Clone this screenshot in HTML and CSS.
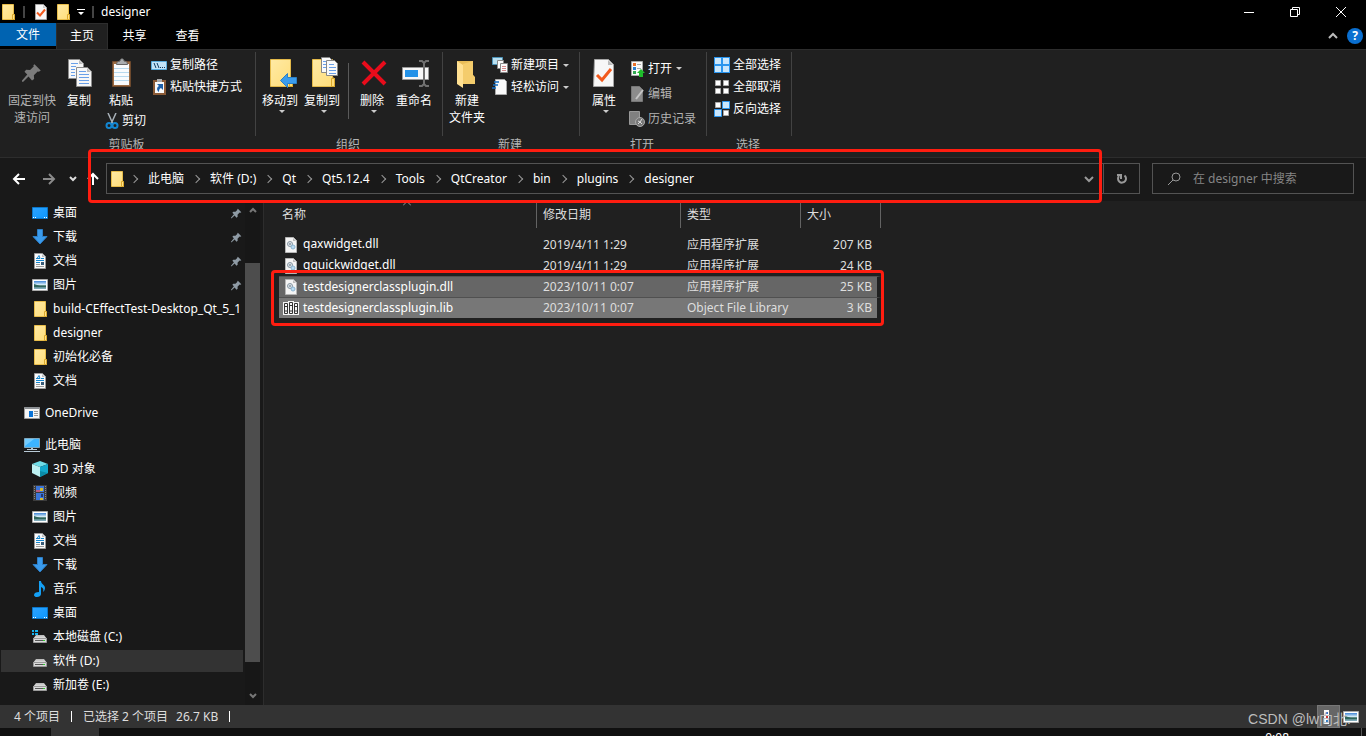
FILE: index.html
```html
<!DOCTYPE html>
<html lang="zh-CN">
<head>
<meta charset="utf-8">
<title>designer</title>
<link rel="stylesheet" href="styles.css">
</head>
<body>
<svg class="sprite" aria-hidden="true">
  <defs>
    <linearGradient id="gold" x1="0" y1="0" x2="1" y2="1"><stop offset="0" stop-color="#ffeaa5"/><stop offset="1" stop-color="#ffdd78"/></linearGradient>
    <linearGradient id="sky" x1="0" y1="0" x2="1" y2="1"><stop offset="0" stop-color="#2ea3ff"/><stop offset="1" stop-color="#0c97ff"/></linearGradient>
    <linearGradient id="photo" x1="0" y1="0" x2="0" y2="1"><stop offset="0" stop-color="#3f84d6"/><stop offset=".45" stop-color="#d5ecf7"/><stop offset=".6" stop-color="#3f6f63"/><stop offset="1" stop-color="#8cb6c9"/></linearGradient>
    <linearGradient id="drive" x1="0" y1="0" x2="0" y2="1"><stop offset="0" stop-color="#b5b5b5"/><stop offset="1" stop-color="#ededed"/></linearGradient>
  </defs>
  <symbol id="i-folder" viewBox="0 0 16 16"><path fill="url(#gold)" stroke="#e8bd4a" d="M2.500.5h11v10l1 .5v4.500h-12z"/><path fill="#ffe08a" stroke="#dba92c" d="M12.500 10.500h2v5h-2z"/></symbol>
  <symbol id="i-doccheck" viewBox="0 0 16 16"><path fill="#f7f7f7" stroke="#a5a5a5" d="M2.500.5h8l3 3v12h-11z"/><path fill="#ccc" d="M10 1v3h3z"/><path fill="none" stroke="#f25a1e" stroke-width="2" d="M4 8.500l3 3 5-6"/></symbol>
  <symbol id="i-desktop" viewBox="0 0 16 16"><path fill="url(#sky)" stroke="#0b76c8" d="M.5 2.500h15v11H.5z"/><path fill="#fff" d="M1 12h1v1H1zM3 12h1v1H3zM12 12h1v1h-1zM14 12h1v1h-1z"/></symbol>
  <symbol id="i-down" viewBox="0 0 16 16"><path fill="#3a9bed" stroke="#2c7ec6" d="M5.500.5h5v7h4.500L8 15 1 7.500h4.500z"/></symbol>
  <symbol id="i-doc" viewBox="0 0 16 16"><path fill="#fafafa" stroke="#9b9b9b" d="M2.500.5h8l3 3v12h-11z"/><path fill="#bbb" d="M10 1v3h3z"/><path fill="none" stroke="#1687cf" d="M5 5.500l2-3 1 3M4 5.500h4M9 5.500h3M4 7.500h8M4 9.500h4"/><path stroke="#999" d="M4 11.500h4M4 13.500h8"/><path fill="#395c78" d="M9 9h3v3H9z"/></symbol>
  <symbol id="i-pic" viewBox="0 0 16 16"><path fill="#fff" stroke="#aaa" d="M.5 2.500h15v11H.5z"/><path fill="url(#photo)" d="M2 4h12v8H2z"/><path fill="#2f665c" d="M2 7l6 2h6v1H2z"/></symbol>
  <symbol id="i-pin" viewBox="0 0 16 16"><path d="M10 1l5 5-1.500 1-1-.3-3 3 .2 3L8 14 5.200 10.800 1 15H0v-1l4.200-4.800L2 7l1.300-1.600 3.200.1 3-3L9 1.800z"/></symbol>
  <symbol id="i-one" viewBox="0 0 16 16"><path fill="#f5f5f5" stroke="#9b9b9b" d="M.5 2.500h15v11H.5z"/><path fill="#8c9094" d="M1 2h14v2H1z"/><path fill="#0a73d6" d="M5 6h4v6H5z"/><path stroke="#999" d="M10 6.500h4M10 8.500h4M10 10.500h4"/></symbol>
  <symbol id="i-pc" viewBox="0 0 16 16"><path fill="#3cb4ff" stroke="#7fa9c0" d="M.5 1.500h15v9H.5z"/><path fill="#72ccff" d="M1 2h9l-9 7z"/><path fill="#b9cad6" d="M7 11h2v2H7zM3 12h10v1H3zM0 14h16v1H0z"/></symbol>
  <symbol id="i-cube" viewBox="0 0 16 16"><path fill="#6fdde8" d="M8 0l8 3-8 3-8-3z"/><path fill="#bdf1f3" d="M0 3l8 3v10l-8-4z"/><path fill="#13a9cc" d="M16 3L8 6v10l8-4z"/><path fill="#0b8ba6" d="M8 10l8 2-8 4z"/></symbol>
  <symbol id="i-film" viewBox="0 0 16 16"><path fill="#3c3c3c" d="M1 0h14v16H1z"/><path stroke="#888" stroke-dasharray="1 1" d="M2.500 1v14M13.500 1v14"/><path fill="#3b75d9" d="M4 1h8v6H4zM4 8h8v7H4z"/><path fill="#b95d83" d="M4 5h4v2H4z"/><path fill="#d4b92e" d="M8 3h3v3H8zM8 13h3v2H8z"/><path fill="#22396f" d="M9 9h2v3H9z"/></symbol>
  <symbol id="i-music" viewBox="0 0 16 16"><path fill="#14a0f5" d="M7 0h2c0 3 4 4 4 7 0 2-1 3-2 4 1-3 0-4-2-5v7c0 2-2 3-4 3-3 0-3-2-3-2 0-2 2-3 5-3z"/></symbol>
  <symbol id="i-drive" viewBox="0 0 16 16"><path fill="url(#drive)" d="M4 6h8l3 4H1z"/><path fill="#dadada" stroke="#9a9a9a" d="M1.500 9.500h13v4h-13z"/><path fill="#555" d="M3 11h10v1H3z"/><path fill="#32c832" d="M11 11h2v1h-2z"/></symbol>
  <symbol id="i-cdrive" viewBox="0 0 16 16"><path fill="#18b4f1" d="M0 1h2v2H0zM3 1h3v2H3zM0 4h2v2H0zM3 4h3v2H3z"/><path fill="url(#drive)" d="M4 6h8l3 4H1z"/><path fill="#dadada" stroke="#9a9a9a" d="M1.500 9.500h13v4h-13z"/><path fill="#555" d="M3 11h10v1H3z"/><path fill="#32c832" d="M11 11h2v1h-2z"/></symbol>
  <symbol id="i-dll" viewBox="0 0 16 16"><path fill="#f4f4f4" stroke="#b5b5b5" d="M2.500.5h8l3 3v12h-11z"/><path fill="#bbb" d="M10 1v3h3z"/><circle cx="7" cy="7" r="2.500" fill="#dce4ea" stroke="#8796a2"/><circle cx="7" cy="7" r="1" fill="#8796a2"/><circle cx="10" cy="10" r="2" fill="#b9dcf3" stroke="#8bb4d0"/></symbol>
  <symbol id="i-lib" viewBox="0 0 16 16"><path fill="#f5f5f5" d="M0 2h5V1h6v1h5v13H0z"/><path fill="none" stroke="#333" d="M1.500 3.500h3v10h-3zM6.500 2.500h3v11h-3zM11.500 3.500h3v10h-3z"/><path stroke="#333" d="M2 6.500h2M7 5.500h2M12 6.500h2M3 10v2M8 10v2M13 10v2"/></symbol>
  <symbol id="i-sheets" viewBox="0 0 32 32"><g fill="#f7f7f7" stroke="#8d8d8d"><path d="M5.500 2.500h11l4 4v15h-15z"/><path d="M13.500 10.500h11l4 4v15h-15z"/></g><path fill="#bbb" d="M16 3v4h4zM24 11v4h4z"/><path stroke="#6aa0e8" d="M8 6.500h7M8 9.500h5M8 12.500h4M8 15.500h4M8 18.500h4M16 14.500h7M16 17.500h10M16 20.500h10M16 23.500h10M16 26.500h10"/></symbol>
  <symbol id="i-bigfolder" viewBox="0 0 32 32"><path fill="url(#gold)" stroke="#e3b949" d="M4.500 2.500h20v18l2 1v8h-22z"/><path fill="#ffdc78" stroke="#dba92c" d="M23.500 21.500h3v8h-3z"/></symbol>
</svg>

<header class="titlebar">
  <svg class="ic"><use href="#i-folder"/></svg><i class="tick"></i>
  <button class="flat" aria-label="属性"><svg class="ic"><use href="#i-doccheck"/></svg></button>
  <button class="flat" aria-label="新建文件夹"><svg class="ic"><use href="#i-folder"/></svg></button>
  <button class="flat" aria-label="自定义快速访问工具栏"><svg class="mini" viewBox="0 0 8 8"><path fill="#fff" d="M0 1h8v1H0zM1 4h6L4 7z"/></svg></button>
  <i class="tick"></i><span class="title">designer</span>
  <div class="winbtns">
    <button class="flat" aria-label="最小化"><svg viewBox="0 0 10 10"><path stroke="#fff" d="M0 5.500h10"/></svg></button>
    <button class="flat" aria-label="还原"><svg viewBox="0 0 10 10"><path fill="none" stroke="#fff" d="M.5 2.500h7v7h-7zM2.500 2V.5h7v7H8"/></svg></button>
    <button class="flat" aria-label="关闭"><svg viewBox="0 0 10 10"><path stroke="#fff" d="M0 0l10 10M10 0L0 10"/></svg></button>
  </div>
</header>

<nav class="tabs">
  <button class="tab file">文件</button>
  <button class="tab active">主页</button>
  <button class="tab">共享</button>
  <button class="tab">查看</button>
  <div class="help">
    <button class="flat" aria-label="最小化功能区"><svg width="10" height="10" viewBox="0 0 10 10"><path fill="none" stroke="#bbb" stroke-width="2" d="M1 7l4-4 4 4"/></svg></button>
    <button class="helpbtn" aria-label="帮助">?</button>
  </div>
</nav>

<section class="ribbon">
  <div class="group g-clip">
    <div class="body">
      <button class="big wide dim"><svg class="pin-big"><use href="#i-pin"/></svg><span>固定到快<br>速访问</span></button>
      <button class="big"><svg class="lg"><use href="#i-sheets"/></svg><span>复制</span></button>
      <div class="stack">
        <button class="big"><svg class="lg" viewBox="0 0 32 32"><path fill="#9b6b43" stroke="#6d492d" d="M7.500 4.500h18v25h-18z"/><path fill="#f8fbfd" d="M9 7h15v21H9z"/><path stroke="#b7d9ee" d="M9 11.500h15M9 15.500h15M9 19.500h15M9 23.500h15"/><path fill="#a9adb0" stroke="#666" d="M11.500 7.500c0-3 2-3 3.500-3.500 0-3 4-3 4 0 2 .5 3.500.5 3.500 3.500z"/></svg><span>粘贴</span></button>
        <button class="small"><svg class="ic" viewBox="0 0 16 16"><path stroke="#a8b1b8" stroke-width="1.500" d="M4 0l5 11M12 0L7 11"/><g fill="none" stroke="#1386d1" stroke-width="2"><circle cx="5" cy="12.500" r="2.500"/><circle cx="11" cy="12.500" r="2.500"/></g></svg>剪切</button>
      </div>
      <div class="col">
        <button class="small"><svg class="ic" viewBox="0 0 16 16"><path fill="#c4e4f8" stroke="#5badde" d="M.5 4.500h15v8H.5z"/><path stroke="#123c5f" d="M3 6l2 5M6 6l2 5M9 10.500h1M11 10.500h1M13 10.500h1"/></svg>复制路径</button>
        <button class="small"><svg class="ic" viewBox="0 0 16 16"><path fill="#fafafa" stroke="#8a5a36" stroke-width="2" d="M3 2h11v13H3z"/><path fill="#aaa" d="M6 0h5v3H6z"/><path fill="#1d5fa8" d="M6 5h6v6l-2-2c-2 1-2 2-2 4-3-2-2-5 0-6z"/></svg>粘贴快捷方式</button>
      </div>
    </div>
    <div class="name">剪贴板</div>
  </div>
  <div class="group g-org">
    <div class="body">
      <button class="big"><svg class="lg" viewBox="0 0 32 32"><use href="#i-bigfolder" width="32" height="32"/><path fill="#3b9cec" stroke="#2b80c6" d="M14.500 23.500l7-7v4h9v6h-9v4z"/></svg><span>移动到</span><i class="caret"></i></button>
      <button class="big"><svg class="lg" viewBox="0 0 32 32"><use href="#i-bigfolder" width="32" height="32"/><g fill="#fafafa" stroke="#888"><path d="M13.500.5h8l3 3v12h-11z"/><path d="M18.500 3.500h8l3 3v12h-11z"/></g><path stroke="#6aa0e8" d="M15 4.500h3M15 7.500h3M15 10.500h3M21 7.500h5M21 10.500h7M21 13.500h7M21 16.500h7"/></svg><span>复制到</span><i class="caret"></i></button>
      <i class="split"></i>
      <button class="big"><svg class="lg" viewBox="0 0 32 32"><path stroke="#e80c1b" stroke-width="4" d="M5 5l22 22M27 5L5 27"/></svg><span>删除</span><i class="caret"></i></button>
      <button class="big"><svg class="lg" viewBox="0 0 32 32"><path fill="#f7f7f7" stroke="#999" d="M2.500 10.500h26v12h-26z"/><path fill="#2492e8" d="M5 13h13v7H5z"/><path fill="none" stroke="#707070" stroke-width="2" d="M19 4h3l2 2v21l-2 2h-3M29 4h-3l-2 2M29 29h-3l-2-2"/></svg><span>重命名</span></button>
    </div>
    <div class="name">组织</div>
  </div>
  <div class="group g-new">
    <div class="body">
      <button class="big"><svg class="lg" viewBox="0 0 32 32"><path fill="#e9bd58" d="M6 4h16v14l2 3v6H11z"/><path fill="#ffe092" d="M6 4l6 4v23l-6-4z"/><path fill="#f4cc6c" d="M12 7l10-3v14l2 2v7H12z"/></svg><span>新建<br>文件夹</span></button>
      <div class="col">
        <button class="small"><svg class="ic" viewBox="0 0 16 16"><path fill="#b9e0f1" stroke="#4d93b8" d="M.5.5h10v7H.5z"/><g fill="#fafafa" stroke="#888"><path d="M5.500 3.500h6v8h-6z"/><path d="M8.500 6.500h7v9h-7z"/></g><path stroke="#d3898b" d="M10 9.500h4M10 11.500h4M10 13.500h4"/></svg>新建项目<i class="caret"></i></button>
        <button class="small"><svg class="ic" viewBox="0 0 16 16"><path fill="#fafafa" stroke="#aaa" d="M3.500.5h9l2 2v13h-11z"/><path stroke="#146fc4" stroke-width="1.500" d="M2 3h5M1 6h5M0 9h4"/></svg>轻松访问<i class="caret"></i></button>
      </div>
    </div>
    <div class="name">新建</div>
  </div>
  <div class="group g-open">
    <div class="body">
      <button class="big"><svg class="lg" viewBox="0 0 32 32"><path fill="#f7f7f7" stroke="#a5a5a5" d="M6.500 2.500h14l5 5v22h-20z"/><path fill="#bbb" d="M20 3v5h5z"/><path fill="none" stroke="#f25a1e" stroke-width="3" d="M9 18l5 5 9-11"/></svg><span>属性</span><i class="caret"></i></button>
      <div class="col roomy">
        <button class="small"><svg class="ic" viewBox="0 0 16 16"><path fill="#fafafa" stroke="#aaa" d="M2.500.5h11v14h-11z"/><path fill="#e8702a" d="M4 2h3v3H4z"/><path fill="#2b7fd0" d="M4 6h3v3H4z"/><path fill="#32a852" d="M4 10h3v3H4z"/><path stroke="#aaa" d="M8 3.500h4M8 7.500h4"/><path fill="#1fbd2c" d="M8 12l4-4 4 4h-2v4h-4v-4z"/></svg>打开<i class="caret"></i></button>
        <button class="small dim"><svg class="ic" viewBox="0 0 16 16"><path fill="#8c8c8c" stroke="#777" d="M2.500.5h8l3 3v12h-11z"/><path stroke="#c5c5c5" stroke-width="2" d="M14 4L7 13"/></svg>编辑</button>
        <button class="small dim"><svg class="ic" viewBox="0 0 16 16"><path fill="#808080" stroke="#999" d="M.5.5h10v13H.5z"/><circle cx="11" cy="11" r="4.500" fill="#777" stroke="#aaa"/><path fill="none" stroke="#ddd" d="M13 8l-2 3 2 2M9 10l2 1-2 2"/></svg>历史记录</button>
      </div>
    </div>
    <div class="name">打开</div>
  </div>
  <div class="group g-sel">
    <div class="body">
      <div class="col">
        <button class="small"><svg class="ic" viewBox="0 0 16 16"><path fill="#2a95ee" d="M0 0h16v16H0z"/><path fill="#c9e6fc" d="M1 1h6v6H1zM9 1h6v6H9zM1 9h6v6H1zM9 9h6v6H9z"/></svg>全部选择</button>
        <button class="small"><svg class="ic" viewBox="0 0 16 16"><path fill="#fff" stroke="#aaa" d="M1.500 1.500h5v5h-5zM9.500 1.500h5v5h-5zM1.500 9.500h5v5h-5zM9.500 9.500h5v5h-5z"/></svg>全部取消</button>
        <button class="small"><svg class="ic" viewBox="0 0 16 16"><path fill="#fff" stroke="#aaa" d="M1.500 1.500h5v5h-5zM9.500 9.500h5v5h-5z"/><path fill="#c9e6fc" stroke="#2a95ee" d="M8.500.5h7v7h-7zM.5 8.500h7v7h-7z"/></svg>反向选择</button>
      </div>
    </div>
    <div class="name">选择</div>
  </div>
</section>

<section class="navrow">
  <div class="arrows">
    <button class="flat" aria-label="后退"><svg viewBox="0 0 14 14"><path fill="none" stroke="#fff" stroke-width="2" d="M13 7H2M7 2L2 7l5 5"/></svg></button>
    <button class="flat" aria-label="前进"><svg viewBox="0 0 14 14"><path fill="none" stroke="#8a8a8a" stroke-width="2" d="M1 7h11M7 2l5 5-5 5"/></svg></button>
    <button class="flat recent" aria-label="最近位置"><svg viewBox="0 0 14 14"><path fill="none" stroke="#ddd" stroke-width="2" d="M4 5l3 3 3-3"/></svg></button>
    <button class="flat up" aria-label="上移"><svg viewBox="0 0 14 14"><path fill="none" stroke="#fff" stroke-width="2" d="M7 13V2M2 7l5-5 5 5"/></svg></button>
  </div>
  <div class="address">
    <svg class="ic"><use href="#i-folder"/></svg>
    <a href="#">此电脑</a><a href="#">软件 (D:)</a><a href="#">Qt</a><a href="#">Qt5.12.4</a><a href="#">Tools</a><a href="#">QtCreator</a><a href="#">bin</a><a href="#">plugins</a><a href="#">designer</a>
    <button class="flat drop" aria-label="以前的位置"><svg viewBox="0 0 10 10"><path fill="none" stroke="#999" stroke-width="2" d="M1 3l4 4 4-4"/></svg></button>
  </div>
  <button class="refresh" aria-label="刷新"><svg viewBox="0 0 12 12"><path fill="none" stroke="#999" stroke-width="2" d="M3 3a4 4 0 1 0 5.500-.5M1 2h4v4"/></svg></button>
  <label class="search"><svg viewBox="0 0 14 14"><g fill="none" stroke="#999"><circle cx="9" cy="5" r="4"/><path d="M6 8l-5 5"/></g></svg><input type="text" aria-label="搜索" placeholder="在 designer 中搜索"></label>
  <div class="mark mark-path"></div>
</section>

<main class="main">
  <aside class="side">
    <div class="tree">
      <a href="#"><svg class="ic"><use href="#i-desktop"/></svg><span>桌面</span><svg class="pin"><use href="#i-pin"/></svg></a>
      <a href="#"><svg class="ic"><use href="#i-down"/></svg><span>下载</span><svg class="pin"><use href="#i-pin"/></svg></a>
      <a href="#"><svg class="ic"><use href="#i-doc"/></svg><span>文档</span><svg class="pin"><use href="#i-pin"/></svg></a>
      <a href="#"><svg class="ic"><use href="#i-pic"/></svg><span>图片</span><svg class="pin"><use href="#i-pin"/></svg></a>
      <a href="#"><svg class="ic"><use href="#i-folder"/></svg><span>build-CEffectTest-Desktop_Qt_5_1</span></a>
      <a href="#"><svg class="ic"><use href="#i-folder"/></svg><span>designer</span></a>
      <a href="#"><svg class="ic"><use href="#i-folder"/></svg><span>初始化必备</span></a>
      <a href="#"><svg class="ic"><use href="#i-doc"/></svg><span>文档</span></a>
      <a href="#" class="root"><svg class="ic"><use href="#i-one"/></svg><span>OneDrive</span></a>
      <a href="#" class="root"><svg class="ic"><use href="#i-pc"/></svg><span>此电脑</span></a>
      <a href="#"><svg class="ic"><use href="#i-cube"/></svg><span>3D 对象</span></a>
      <a href="#"><svg class="ic"><use href="#i-film"/></svg><span>视频</span></a>
      <a href="#"><svg class="ic"><use href="#i-pic"/></svg><span>图片</span></a>
      <a href="#"><svg class="ic"><use href="#i-doc"/></svg><span>文档</span></a>
      <a href="#"><svg class="ic"><use href="#i-down"/></svg><span>下载</span></a>
      <a href="#"><svg class="ic"><use href="#i-music"/></svg><span>音乐</span></a>
      <a href="#"><svg class="ic"><use href="#i-desktop"/></svg><span>桌面</span></a>
      <a href="#"><svg class="ic"><use href="#i-cdrive"/></svg><span>本地磁盘 (C:)</span></a>
      <a href="#" class="current"><svg class="ic"><use href="#i-drive"/></svg><span>软件 (D:)</span></a>
      <a href="#"><svg class="ic"><use href="#i-drive"/></svg><span>新加卷 (E:)</span></a>
    </div>
    <div class="scroll">
      <svg viewBox="0 0 8 8"><path fill="none" stroke="#777" stroke-width="2" d="M1 6l3-3 3 3"/></svg>
      <div class="thumb"></div>
      <svg viewBox="0 0 8 8"><path fill="none" stroke="#777" stroke-width="2" d="M1 2l3 3 3-3"/></svg>
    </div>
  </aside>
  <div class="files">
    <svg class="sort" viewBox="0 0 8 5"><path fill="none" stroke="#999" d="M0 4.500l4-4 4 4"/></svg>
    <table>
      <colgroup><col class="c-name"><col class="c-date"><col class="c-type"><col class="c-size"></colgroup>
      <thead><tr><th>名称</th><th>修改日期</th><th>类型</th><th>大小</th></tr></thead>
      <tbody>
        <tr><td><svg class="ic"><use href="#i-dll"/></svg>qaxwidget.dll</td><td>2019/4/11 1:29</td><td>应用程序扩展</td><td>207 KB</td></tr>
        <tr><td><svg class="ic"><use href="#i-dll"/></svg>qquickwidget.dll</td><td>2019/4/11 1:29</td><td>应用程序扩展</td><td>24 KB</td></tr>
        <tr class="sel"><td><svg class="ic"><use href="#i-dll"/></svg>testdesignerclassplugin.dll</td><td>2023/10/11 0:07</td><td>应用程序扩展</td><td>25 KB</td></tr>
        <tr class="sel focus"><td><svg class="ic"><use href="#i-lib"/></svg>testdesignerclassplugin.lib</td><td>2023/10/11 0:07</td><td>Object File Library</td><td>3 KB</td></tr>
      </tbody>
    </table>
    <div class="mark mark-files"></div>
  </div>
</main>

<footer class="status">
  <span>4 个项目</span><i></i><span>已选择 2 个项目</span><span class="size">26.7 KB</span><i></i>
  <div class="views">
    <button class="view on" aria-label="详细信息"><svg class="ic" viewBox="0 0 16 16"><path fill="#fafafa" d="M3 1h5v14H3z"/><path stroke="#3477c4" stroke-width="2" d="M5 4h2M5 12h2"/><path stroke="#c33" stroke-width="2" d="M5 8h2"/></svg></button>
    <button class="view" aria-label="大图标"><svg class="ic"><use href="#i-pic"/></svg></button>
  </div>
  <div class="watermark">CSDN @lw向北.</div>
</footer>
<div class="taskbar"><span class="app"></span><span class="clock">0:08</span><span class="edge"></span></div>
</body>
</html>
```
FILE: styles.css
```css
* { box-sizing: border-box; }
body {
  margin: 0; height: 100vh; overflow: hidden;
  display: flex; flex-direction: column;
  background: #000; color: #fff;
  font: 12px/16px "Noto Sans", "Noto Sans CJK SC", sans-serif;
}
button { font: inherit; color: inherit; background: none; border: 0; padding: 0; white-space: nowrap; }
a { color: inherit; text-decoration: none; }
svg { display: block; flex: none; }
.sprite { position: absolute; width: 0; height: 0; }
.ic { width: 16px; height: 16px; }
.flat { display: flex; align-items: center; justify-content: center; }
.dim { color: #b4b4b4; }

.titlebar { display: flex; align-items: center; height: 23px; flex: none; }
.titlebar .tick { width: 2px; height: 12px; margin: 0 8px 0 7px; background: #444; }
.titlebar .flat { margin-right: 6px; }
.titlebar .mini { width: 8px; height: 8px; }
.titlebar .flat + .tick { margin: 0 7px 0 1px; }
.winbtns { display: flex; margin-left: auto; padding-right: 2px; }
.titlebar .winbtns .flat { width: 46px; height: 21px; margin: 0; }
.winbtns svg { width: 10px; height: 10px; }

.tabs { display: flex; height: 26px; flex: none; }
.tab { width: 53px; height: 26px; }
.tab.file { width: 56px; height: 23px; padding-top: 1px; background: #0063b1; }
.tab.active { width: 52px; padding-bottom: 1px; background: #202020; border: 1px solid #2d2d2d; border-bottom: 0; }
.help { display: flex; align-items: center; gap: 9px; margin-left: auto; padding-right: 3px; }
.helpbtn { width: 16px; height: 16px; border-radius: 50%; background: #0a6fd0; font-weight: 700; }

.ribbon { display: flex; flex: none; height: 109px; background: #202020; border-top: 1px solid #2d2d2d; border-bottom: 1px solid #2d2d2d; }
.group { display: flex; flex-direction: column; padding-top: 2px; }
.body { display: flex; height: 84px; padding-top: 5px; border-right: 1px solid #424242; }
.name { height: 16px; padding: 1px 3px 0 0; color: #b4b4b4; text-align: center; }
.big { display: flex; flex-direction: column; align-items: center; align-self: flex-start; width: 42px; }
.big span { line-height: 17px; margin-top: 3px; }
.big.wide { width: 60px; margin-left: 2px; }
.lg { width: 32px; height: 32px; }
.g-org .lg { margin-left: 3px; }
.pin-big { width: 20px; height: 20px; margin: 6px 0; fill: #7b7b7b; }
.caret { width: 0; height: 0; border: 3px solid transparent; border-top-color: #ccc; border-bottom: 0; }
.big .caret { margin: 1px 0 0 4px; }
.small { display: flex; align-items: center; gap: 3px; height: 22px; }
.small .caret { margin-left: 1px; }
.col { display: flex; flex-direction: column; align-items: flex-start; }
.col .small { height: 22px; margin-top: -3px; margin-bottom: 3px; }
.col.roomy .small { height: 25px; margin-top: -1px; margin-bottom: 1px; }
.stack .small { margin: 1px 0 0 4px; gap: 2px; }
.g-clip .big:nth-child(2) { width: 34px; }
.g-clip .body { width: 256px; }
.g-clip .stack { margin-left: 4px; }
.g-clip .col { margin-left: 5px; }
.g-org .body { width: 187px; padding-left: 3px; }
.split { width: 1px; height: 56px; margin: 6px 2px 0 5px; background: #5a5a5a; }
.g-new .body { width: 137px; padding-left: 3px; }
.g-new .col { margin-left: 4px; }
.g-open .body { width: 127px; padding-left: 3px; }
.g-open .col { margin-left: 4px; }
.g-sel .body { width: 85px; padding-left: 7px; }

.navrow { position: relative; display: flex; align-items: flex-start; height: 43px; flex: none; padding: 5px 12px 0 0; background: #191919; }
.arrows { display: flex; width: 106px; padding-left: 4px; }
.arrows .flat { width: 30px; height: 31px; }
.arrows .recent { width: 17px; }
.arrows .up { width: 24px; }
.arrows svg { width: 14px; height: 14px; }
.address { flex: 1; display: flex; align-items: center; height: 31px; padding-left: 2px; border: 1px solid #535353; }
.address a { display: flex; align-items: center; height: 27px; }
.address a::before { content: ""; width: 5px; height: 5px; margin: 0 11px 0 9px; border: solid #999; border-width: 1px 1px 0 0; transform: rotate(45deg); }
.address a:first-of-type::before { margin-left: 6px; }
.address .drop { width: 28px; height: 29px; margin-left: auto; }
.drop svg { width: 10px; height: 10px; }
.refresh { display: flex; align-items: center; justify-content: center; width: 36px; height: 31px; border: 1px solid #535353; border-left: 0; }
.refresh svg { width: 12px; height: 12px; }
.search { display: flex; align-items: center; gap: 12px; width: 202px; height: 31px; margin-left: 12px; padding-left: 14px; border: 1px solid #535353; }
.search svg { width: 14px; height: 14px; }
.search input { flex: 1; min-width: 0; padding: 0; border: 0; background: none; color: #fff; font: inherit; }
.search input::placeholder { color: #858585; opacity: 1; }

.mark { position: absolute; border: 3px solid #ff1d10; border-radius: 4px; pointer-events: none; z-index: 2; }
.mark-path { left: 88px; right: 264px; top: -9px; height: 54px; }
.mark-files { left: 7px; top: 69px; width: 613px; height: 56px; }

.main { flex: 1; min-height: 0; display: flex; background: #202020; }
.side { display: flex; width: 264px; background: #191919; border-right: 1px solid #2d2d2d; }
.tree { width: 245px; padding-top: 1px; overflow: hidden; }
.tree a { display: flex; align-items: center; gap: 5px; height: 22px; margin: 0 2px 2px 1px; padding-left: 31px; white-space: nowrap; overflow: hidden; }
.tree .root { margin-top: 10px; margin-bottom: 10px; padding-left: 23px; }
.tree .root + .root + a { margin-top: -8px; }
.tree .current { background: #333; }
.pin { width: 11px; height: 11px; margin-left: auto; margin-right: 1px; fill: #8f9ba5; }
.scroll { display: flex; flex-direction: column; align-items: center; width: 15px; padding: 5px 0; background: #171717; }
.scroll svg { width: 8px; height: 8px; }
.thumb { flex: 1; width: 15px; margin: 49px 0 30px; background: #4d4d4d; }
.files { position: relative; flex: 1; padding-left: 15px; }
.sort { position: absolute; left: 139px; top: 0; width: 8px; height: 5px; }
table { width: 602px; table-layout: fixed; border-spacing: 0; }
.c-name { width: 258px; } .c-date { width: 144px; } .c-type { width: 120px; } .c-size { width: 80px; }
th { height: 27px; padding: 0 0 0 6px; border-right: 1px solid #636363; color: #dedede; font-weight: 400; text-align: left; }
th:first-child { padding-left: 3px; }
tbody::before { content: ""; display: block; height: 6px; }
td { height: 21px; padding: 0 0 0 6px; color: #dedede; white-space: nowrap; }
td:first-child { padding-left: 4px; color: #fff; }
td:last-child { padding-right: 5px; border-right: 4px solid transparent; background-clip: padding-box; text-align: right; }
td .ic { display: inline-block; margin-right: 4px; vertical-align: middle; }
.sel td { background-color: #666; border-top: 1px solid #505050; }
.focus td { background-color: #777; }

.status { position: relative; display: flex; align-items: center; flex: none; height: 23px; padding: 0 6px 0 14px; background: #333; color: #dedede; }
.status i { width: 1px; height: 11px; margin: 0 11px; background: #fff; }
.status .size { margin-left: 8px; }
.views { display: flex; gap: 2px; margin-left: auto; }
.view { display: flex; align-items: center; justify-content: center; width: 18px; height: 23px; }
.view.on { width: 23px; background: #666; border: 1px solid #777; }
.watermark { position: absolute; right: 15px; top: 4px; font: 14px/20px "Liberation Sans", "Noto Sans CJK SC", sans-serif; color: #bdbdbd; }
.taskbar { display: flex; flex: none; height: 8px; overflow: hidden; background: #101010; }
.app { width: 48px; margin-left: 51px; background: #333; }
.clock { margin-left: auto; padding: 2px 72px 0 0; }
.edge { width: 1px; margin-right: 4px; background: #555; }
```
